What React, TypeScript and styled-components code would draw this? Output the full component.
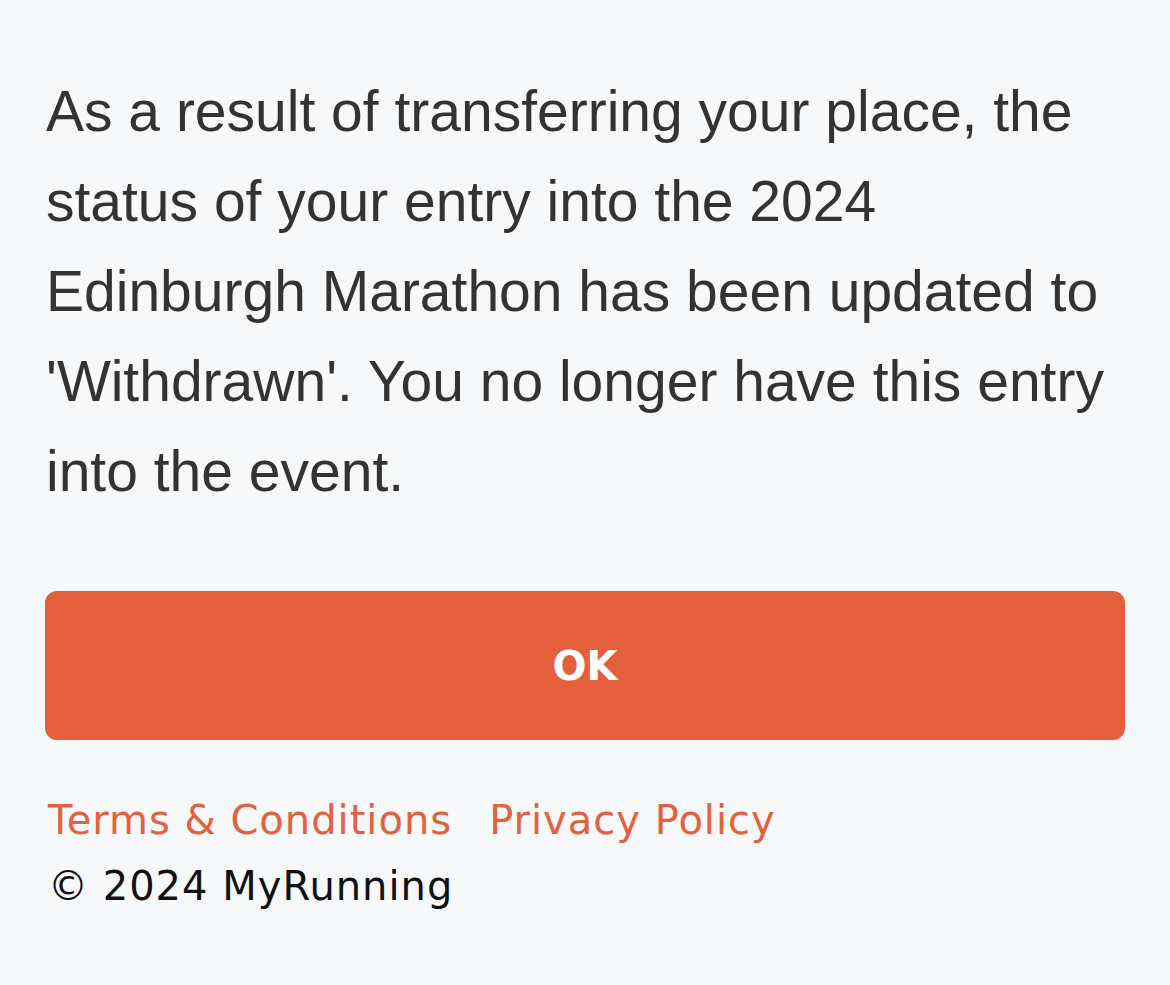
import styled, { createGlobalStyle } from 'styled-components';

const GlobalStyle = createGlobalStyle`
  html, body {
    margin: 0;
    padding: 0;
    background: #f7f8fa;
  }
`;

const Page = styled.div({
  minHeight: '985px',
  boxSizing: 'border-box',
  padding: '66px 45px 0',
  display: 'flex',
  flexDirection: 'column',
});

const Message = styled.p({
  margin: 0,
  fontFamily: '"Liberation Sans", Arial, sans-serif',
  fontSize: '57px',
  lineHeight: '90px',
  color: '#333333',
  paddingLeft: '1px',
});

const OkButton = styled.button({
  marginTop: '75px',
  height: '149px',
  width: '100%',
  border: 'none',
  borderRadius: '12px',
  background: '#e45f3b',
  color: '#ffffff',
  fontFamily: '"DejaVu Sans", "Noto Sans", sans-serif',
  fontWeight: 700,
  fontSize: '40px',
  cursor: 'pointer',
});

const Footer = styled.footer({
  marginTop: '47px',
  paddingLeft: '3px',
  fontFamily: '"DejaVu Sans", "Noto Sans", sans-serif',
  fontSize: '40px',
  letterSpacing: '1px',
  lineHeight: '66px',
});

const Links = styled.div({
  display: 'flex',
  gap: '37px',
});

const FooterLink = styled.a({
  color: '#e2613f',
  textDecoration: 'none',
});

const Copyright = styled.div({
  color: '#111111',
});

export default function App() {
  return (
    <>
      <GlobalStyle />
      <Page>
        <Message>
          As a result of transferring your place, the status of your entry into the 2024
          Edinburgh Marathon has been updated to 'Withdrawn'. You no longer have this entry
          into the event.
        </Message>
        <OkButton>OK</OkButton>
        <Footer>
          <Links>
            <FooterLink href="#">Terms &amp; Conditions</FooterLink>
            <FooterLink href="#">Privacy Policy</FooterLink>
          </Links>
          <Copyright>© 2024 MyRunning</Copyright>
        </Footer>
      </Page>
    </>
  );
}
